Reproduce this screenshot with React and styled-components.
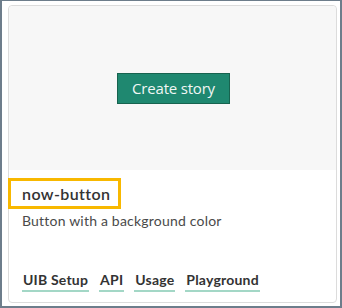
import React from "react";
import styled, { createGlobalStyle } from "styled-components";

const GlobalStyle = createGlobalStyle`
  html, body {
    margin: 0;
    padding: 0;
    background: #ffffff;
  }
  * {
    box-sizing: border-box;
  }
`;

const Frame = styled.div`
  width: 342px;
  height: 308px;
  border: 2px solid #6d7d8b;
  border-top-width: 1px;
  padding: 4px 3px 3px 6px;
  background: #ffffff;
`;

const Card = styled.div`
  height: 100%;
  border: 1px solid #dcdcdc;
  border-radius: 4px;
  display: flex;
  flex-direction: column;
`;

const Preview = styled.div`
  height: 164px;
  background: #f7f7f7;
  border-radius: 4px 4px 0 0;
  display: flex;
  align-items: center;
  justify-content: center;
`;

const StoryButton = styled.button`
  width: 113px;
  height: 31px;
  background: #1f8870;
  border: 1px solid #17634f;
  border-radius: 0;
  color: #f2f7f5;
  font-family: "Open Sans", "Noto Sans", sans-serif;
  font-size: 15px;
  letter-spacing: -0.2px;
  padding: 0;
  margin-left: 2px;
  cursor: pointer;
`;

const Body = styled.div`
  flex: 1;
  display: flex;
  flex-direction: column;
  padding: 8px 12px 10px 13px;
  font-family: "Lato", "Liberation Sans", sans-serif;
`;

const Title = styled.h3`
  align-self: flex-start;
  margin: 0 0 0 -14px;
  padding: 4px 8px 3px 11px;
  border: 3px solid #f8b800;
  font-size: 16px;
  font-weight: 600;
  color: #333333;
  line-height: 18px;
  letter-spacing: 0.4px;
`;

const Description = styled.p`
  margin: 3px 0 0;
  font-size: 14px;
  color: #4a4a4a;
  line-height: 18px;
  letter-spacing: 0.2px;
`;

const Links = styled.nav`
  margin-top: auto;
  display: flex;
  gap: 10px;
`;

const TabLink = styled.a`
  font-size: 14px;
  font-weight: 700;
  color: #333333;
  text-decoration: none;
  padding: 0 1px 1px;
  border-bottom: 2px solid #a3d7c6;
  line-height: 18px;
  letter-spacing: 0.2px;
  cursor: pointer;
`;

const links = ["UIB Setup", "API", "Usage", "Playground"];

export default function App() {
  return (
    <>
      <GlobalStyle />
      <Frame>
        <Card>
          <Preview>
            <StoryButton>Create story</StoryButton>
          </Preview>
          <Body>
            <Title>now-button</Title>
            <Description>Button with a background color</Description>
            <Links>
              {links.map((l) => (
                <TabLink key={l}>{l}</TabLink>
              ))}
            </Links>
          </Body>
        </Card>
      </Frame>
    </>
  );
}
